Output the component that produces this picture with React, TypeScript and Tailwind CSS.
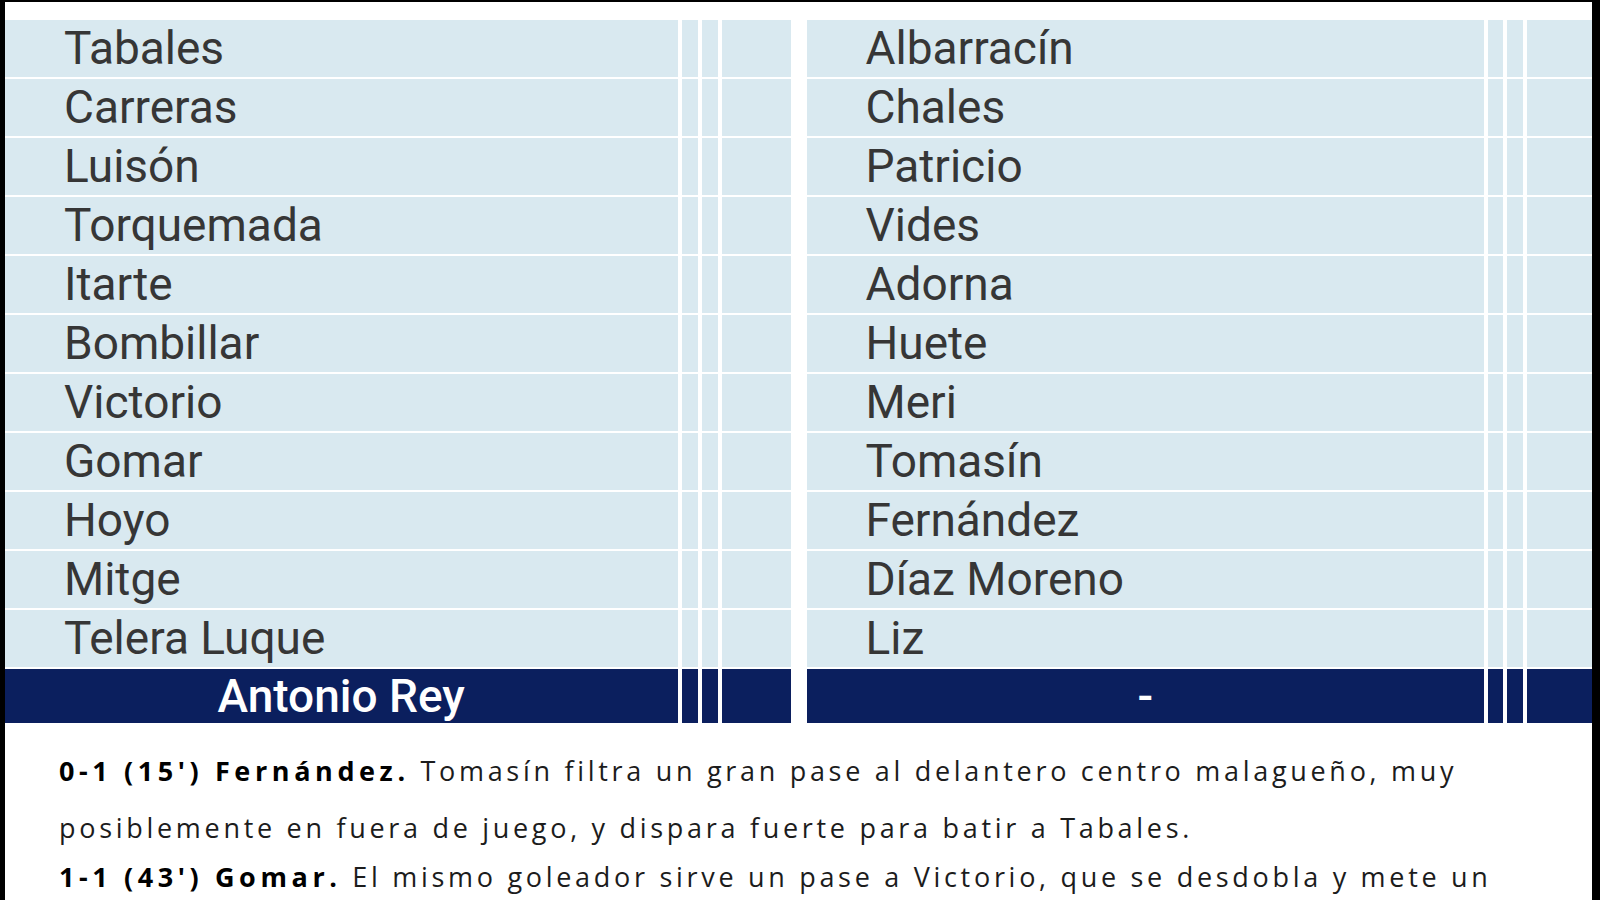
import React from 'react';

interface Team {
  players: string[];
  coach: string;
  cols: string;
}

const home: Team = {
  players: ['Tabales', 'Carreras', 'Luisón', 'Torquemada', 'Itarte', 'Bombillar', 'Victorio', 'Gomar', 'Hoyo', 'Mitge', 'Telera Luque'],
  coach: 'Antonio Rey',
  cols: 'grid-cols-[1fr_16px_16px_69px]',
};

const away: Team = {
  players: ['Albarracín', 'Chales', 'Patricio', 'Vides', 'Adorna', 'Huete', 'Meri', 'Tomasín', 'Fernández', 'Díaz Moreno', 'Liz'],
  coach: '-',
  cols: 'grid-cols-[1fr_15px_16px_65px]',
};

const LineUp: React.FC<{ team: Team }> = ({ team }) => (
  <div className="flex flex-1 flex-col gap-[2px]">
    {team.players.map((name) => (
      <div key={name} className={`grid ${team.cols} h-[57px] shrink-0 grid-rows-[57px] gap-x-[4px] leading-none`}>
        <div className="flex items-center bg-[#d9e9f0] pb-[2px] pl-[59px] text-[46px] text-[#363636]">{name}</div>
        <div className="bg-[#d9e9f0]" />
        <div className="bg-[#d9e9f0]" />
        <div className="bg-[#d9e9f0]" />
      </div>
    ))}
    {/* coach row */}
    <div className={`grid ${team.cols} h-[54px] shrink-0 grid-rows-[54px] gap-x-[4px] leading-none`}>
      <div className="flex items-center justify-center bg-[#0b1f5e] text-[46px] font-medium text-white">{team.coach}</div>
      <div className="bg-[#0b1f5e]" />
      <div className="bg-[#0b1f5e]" />
      <div className="bg-[#0b1f5e]" />
    </div>
  </div>
);

export default function App() {
  return (
    <div className="h-[900px] w-[1600px] overflow-hidden bg-black pt-[2px] pl-[5px] pr-[8px]" style={{ fontFamily: 'Roboto, sans-serif' }}>
      <div className="h-full bg-white pt-[18px]">
        <div className="flex gap-[16px]">
          <LineUp team={home} />
          <LineUp team={away} />
        </div>

        <div className="pl-[54px] pr-[60px] pt-[19px] text-[27px] tracking-[3.7px] text-[#1c1c1c]" style={{ fontFamily: '"Open Sans", sans-serif' }}>
          <p className="leading-[57px]">
            <b className="font-bold tracking-[4.6px] text-black">0-1 (15') Fernández.</b> Tomasín filtra un gran pase al delantero centro malagueño, muy posiblemente en fuera de juego, y dispara fuerte para batir a Tabales.
          </p>
          <p className="-mt-[8px] leading-[57px]">
            <b className="font-bold tracking-[4.6px] text-black">1-1 (43') Gomar.</b> El mismo goleador sirve un pase a Victorio, que se desdobla y mete un centro que remata Gomar a la red.
          </p>
        </div>
      </div>
    </div>
  );
}
